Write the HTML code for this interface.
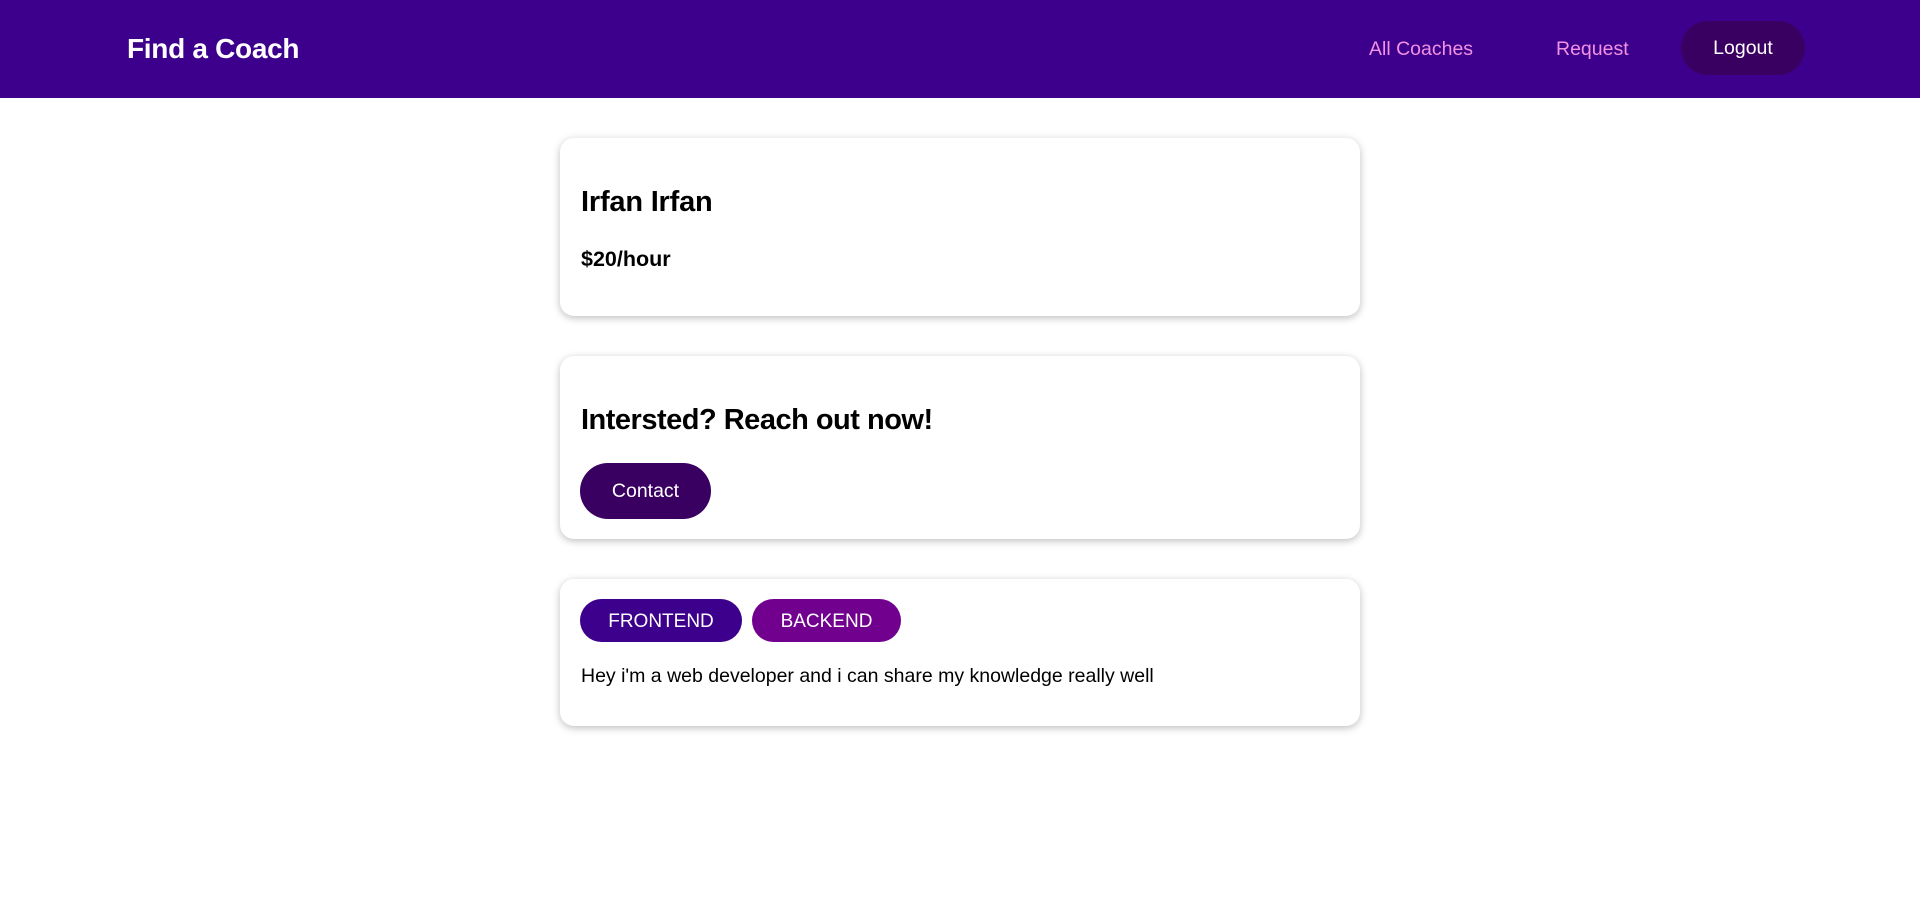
<!DOCTYPE html>
<html><head><style>
*{box-sizing:border-box;margin:0;padding:0}
body{width:1920px;height:917px;background:#fff;font-family:"Liberation Sans",Roboto,sans-serif;overflow:hidden;position:relative}
header{position:absolute;left:0;top:0;width:1920px;height:98px;background:#3d008d}
.logo{position:absolute;left:127px;top:31px;color:#fff;font-size:28px;font-weight:bold;line-height:36px;letter-spacing:-0.3px}
.nav{position:absolute;top:37px;color:#f391e3;font-size:19.5px;line-height:24px}
.logout{position:absolute;left:1681px;top:21px;width:124px;height:54px;border-radius:27px;background:#3a0061;color:#fff;font-size:19.5px;line-height:54px;text-align:center}
.card{position:absolute;left:560px;width:800px;background:#fff;border-radius:14px;box-shadow:0 2px 8px rgba(0,0,0,0.26)}
.t{position:absolute;left:21px;color:#000;white-space:nowrap}
.pill{position:absolute;color:#fff;text-align:center;border-radius:30px}
</style></head><body>
<header>
<div class="logo">Find a Coach</div>
<div class="nav" style="left:1369px">All Coaches</div>
<div class="nav" style="left:1556px">Request</div>
<div class="logout">Logout</div>
</header>
<div class="card" style="top:138px;height:178px">
<div class="t" style="top:46px;font-size:29px;font-weight:bold;line-height:36px;letter-spacing:-0.2px">Irfan Irfan</div>
<div class="t" style="top:107px;font-size:21.5px;font-weight:bold;line-height:28px">$20/hour</div>
</div>
<div class="card" style="top:356px;height:183px">
<div class="t" style="top:46px;font-size:29px;font-weight:bold;line-height:36px;letter-spacing:-0.5px">Intersted? Reach out now!</div>
<div class="pill" style="left:20px;top:107px;width:131px;height:56px;line-height:57px;background:#3a0061;font-size:19.5px">Contact</div>
</div>
<div class="card" style="top:579px;height:147px">
<div class="pill" style="left:20px;top:20px;width:162px;height:43px;line-height:45px;background:#3d008d;font-size:19px">FRONTEND</div>
<div class="pill" style="left:192px;top:20px;width:149px;height:43px;line-height:45px;background:#71008f;font-size:19px">BACKEND</div>
<div class="t" style="top:85px;font-size:19.5px;line-height:24px">Hey i'm a web developer and i can share my knowledge really well</div>
</div>
</body></html>
